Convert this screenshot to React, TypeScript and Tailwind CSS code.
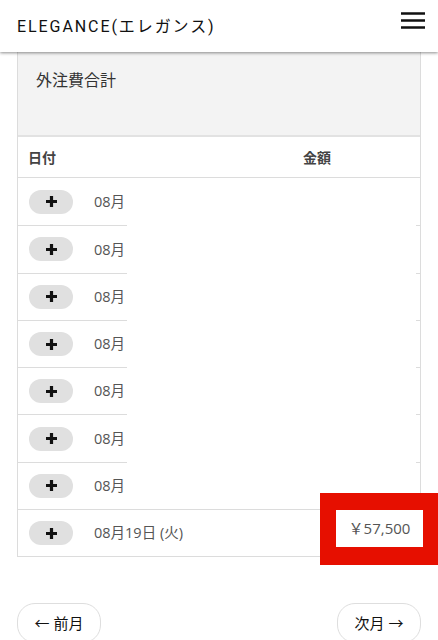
const ROWS = ['08月', '08月', '08月', '08月', '08月', '08月', '08月'];

function PlusPill() {
  return (
    <div className="ml-[11px] w-[44px] h-[24px] rounded-full bg-[#e0e0e0] flex items-center justify-center shrink-0">
      <svg width="13" height="13" viewBox="0 0 13 13">
        <path d="M6.5 1v11M1 6.5h11" stroke="#111" strokeWidth="3.2" />
      </svg>
    </div>
  );
}

export default function App() {
  return (
    <div className="relative w-[438px] h-[640px] overflow-hidden bg-white" style={{ fontFamily: '"Open Sans", "Noto Sans CJK JP", sans-serif' }}>
      {/* Header */}
      <div className="relative z-10 h-[52px] bg-white flex items-center justify-between pl-[17px] pr-[12px] shadow-[0_1px_3px_rgba(0,0,0,0.45)]">
        <p className="text-[16px] tracking-[0.12em] text-[#111] pt-[2px]" style={{ fontFamily: 'Roboto, "Noto Sans CJK JP", sans-serif' }}>
          ELEGANCE(エレガンス)
        </p>
        <svg width="26" height="52" viewBox="0 0 26 52">
          <path d="M1 13.5h24M1 20.5h24M1 27.5h24" stroke="#111" strokeWidth="2.6" />
        </svg>
      </div>

      {/* Card */}
      <div className="mx-[17px] border-x border-b border-[#dcdcdc]">
        <div className="h-[85px] bg-[#f3f3f3] border-b-2 border-[#e2e2e2] pl-[18px] pt-[16px]">
          <p className="text-[16px] text-[#333]">外注費合計</p>
        </div>
        <div className="h-[41px] flex items-center text-[14px] font-bold text-[#444] border-b border-[#dcdcdc]">
          <span className="pl-[10px] w-[285px]">日付</span>
          <span>金額</span>
        </div>
        {ROWS.map((d, i) => (
          <div key={i} className="h-[47.3px] flex">
            <div className={`w-[109px] flex items-center gap-[21px] ${i > 0 ? 'border-t border-[#dcdcdc]' : ''}`}>
              <PlusPill />
              <span className="text-[14.5px] text-[#555]">{d}</span>
            </div>
            <div className="flex-1" />
            <div className={`w-[4px] ${i > 0 ? 'border-t border-[#dcdcdc]' : ''}`} />
          </div>
        ))}
        <div className="h-[47.3px] flex items-center gap-[21px] border-t border-[#dcdcdc]">
          <PlusPill />
          <span className="text-[14.5px] text-[#555]">08月19日 (火)</span>
        </div>
      </div>

      {/* Pager */}
      <div className="flex justify-between mx-[17px] mt-[46px]">
        <button className="h-[40px] w-[84px] rounded-[18px] border border-[#dedede] text-[15px] text-[#111] flex items-center justify-center">
          ← 前月
        </button>
        <button className="h-[40px] w-[84px] rounded-[18px] border border-[#dedede] text-[15px] text-[#111] flex items-center justify-center">
          次月 →
        </button>
      </div>

      {/* Highlight annotation */}
      <div className="absolute left-[320px] top-[493px] w-[118px] h-[72px] bg-[#e60f00] pl-[16px] pt-[17px]">
        <div className="w-[87px] h-[37px] bg-white flex items-center justify-center text-[15px] text-[#555]">
          ￥57,500
        </div>
      </div>
    </div>
  );
}
